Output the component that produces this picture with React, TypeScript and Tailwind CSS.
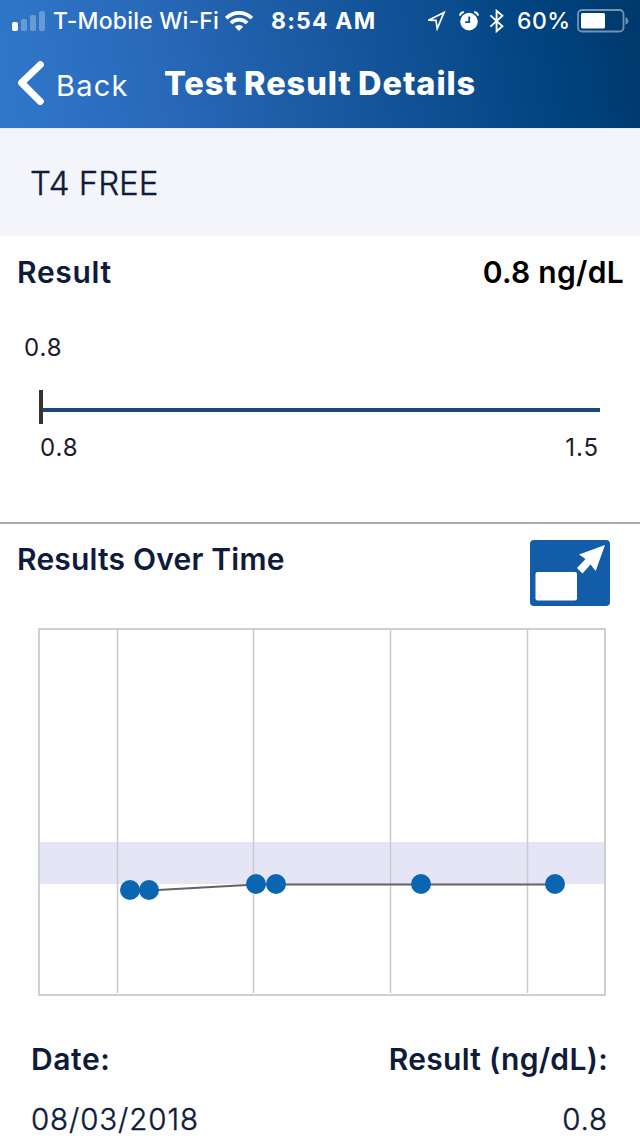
interface Reading {
  x: number;
  y: number;
}

interface ResultRow {
  date: string;
  value: string;
}

const readings: Reading[] = [
  { x: 92, y: 262 },
  { x: 111, y: 262 },
  { x: 218, y: 256 },
  { x: 238, y: 256 },
  { x: 383, y: 256 },
  { x: 517, y: 256 },
];

const gridLines = [79.5, 215.5, 352.5, 489.5];

const rows: ResultRow[] = [{ date: "08/03/2018", value: "0.8" }];

function StatusBar() {
  return (
    <div className="flex h-[41px] items-center whitespace-nowrap pl-3 text-[23px] font-medium leading-none">
      <svg width="34" height="20" viewBox="0 0 34 20" fill="currentColor">
        <rect x="0" y="11" width="6" height="9" rx="1.8" />
        <rect x="9" y="8" width="6" height="12" rx="1.8" opacity="0.28" />
        <rect x="18" y="4" width="6" height="16" rx="1.8" opacity="0.28" />
        <rect x="27" y="0" width="6" height="20" rx="1.8" opacity="0.28" />
      </svg>
      <span className="ml-[7px] w-[172px] pt-px tracking-[0.2px]">T-Mobile Wi-Fi</span>
      <svg width="28" height="20" viewBox="0 0 28 20" fill="none" stroke="currentColor" strokeWidth="3.8">
        <path d="M1.2 7.2a18.2 18.2 0 0 1 25.6 0" />
        <path d="M5.9 12a11.5 11.5 0 0 1 16.2 0" />
        <path d="M14 20l-4.2-4.3a6 6 0 0 1 8.4 0z" fill="currentColor" stroke="none" />
      </svg>
      <span className="ml-[18px] w-[154px] pt-px font-bold tracking-[1.2px]">8:54 AM</span>
      <svg width="22" height="20" viewBox="0 0 22 20" fill="none" stroke="currentColor" strokeWidth="1.7">
        <path d="M19 1.6L3.4 9.2l7.600 .2 1.200 8.200z" />
      </svg>
      <svg className="ml-[12px]" width="20" height="20" viewBox="0 0 20 20" fill="none" stroke="currentColor">
        <circle cx="10" cy="10.6" r="8.8" fill="currentColor" stroke="none" />
        <path d="M10.2 5.4v5.8H6.2" stroke="#0b4c8c" strokeWidth="1.8" />
        <path d="M.8 4.6Q1.6 1.6 4.8 1M19.2 4.6Q18.4 1.6 15.2 1" strokeWidth="1.8" />
      </svg>
      <svg className="ml-[10px]" width="16" height="24" viewBox="0 0 16 24" fill="none" stroke="currentColor" strokeWidth="1.9">
        <path d="M1.4 6.4l12 10.8-5.8 5V1.8l5.8 5L1.4 17.6" />
      </svg>
      <span className="ml-[12px] w-[60px] pt-px tracking-[0.5px]">60%</span>
      <svg width="54" height="24" viewBox="0 0 54 24" fill="none">
        <rect x="1" y="1" width="45.5" height="21.5" rx="4" stroke="#fff" strokeWidth="1.8" opacity="0.45" />
        <rect x="4" y="4" width="24" height="15.5" rx="1.5" fill="#fff" />
        <path d="M48.5 8q3 1.5 3 4t-3 4z" fill="#fff" opacity="0.45" />
      </svg>
    </div>
  );
}

function NavBar() {
  return (
    <div className="flex h-[87px] items-center whitespace-nowrap pl-[17px]">
      <svg width="27" height="44" viewBox="0 0 27 44" fill="none" stroke="currentColor" strokeWidth="7" strokeLinecap="round" strokeLinejoin="round" className="mb-1">
        <path d="M23.3 3.7L4.5 21.7l18.8 18.7" />
      </svg>
      <span className="ml-[12px] w-[108px] pt-[2px] text-[29px] tracking-[1.2px]">Back</span>
      <h1 className="text-[32.5px] font-extrabold tracking-[0.9px] [word-spacing:-1.5px]">Test Result Details</h1>
    </div>
  );
}

function RangeBar() {
  return (
    <div className="pt-[23px] text-2xl leading-[32px] tracking-[0.9px] text-[#1b1b2c]">
      <div className="pl-6">0.8</div>
      <div className="mt-[26px] ml-[39px] flex h-[34px] w-[561px] items-center">
        <div className="h-full w-1 bg-[#333]" />
        <div className="mt-[6px] h-1 flex-1 bg-[#1c4a75]" />
      </div>
      <div className="mt-[8px] flex justify-between pl-10 pr-[41px]">
        <span>0.8</span>
        <span>1.5</span>
      </div>
    </div>
  );
}

function ExpandButton() {
  return (
    <button className="h-[66px] w-20" aria-label="Expand">
      <svg width="80" height="66" viewBox="0 0 80 66">
        <rect width="80" height="66" rx="4" fill="#125ca8" />
        <rect x="5.5" y="32" width="41.5" height="28.5" rx="2" fill="#fff" />
        <path d="M75 5L49 14.5l6.5 4.5L47 28l5.5 5.5 8-9L65.7 31z" fill="#fff" />
      </svg>
    </button>
  );
}

function TrendChart() {
  return (
    <svg className="ml-[38px] block" width="568" height="368" viewBox="0 0 568 368">
      <rect x="2" y="214" width="564" height="42" fill="#e4e6f6" />
      {gridLines.map((x) => (
        <line key={x} x1={x} x2={x} y1="2" y2="365" stroke="#cbcbcd" strokeWidth="1.5" />
      ))}
      <rect x="1" y="1" width="566" height="366" fill="none" stroke="#cfcfcf" strokeWidth="2" />
      <polyline
        points={readings.map((r) => `${r.x},${r.y + 0.5}`).join(" ")}
        fill="none"
        stroke="#65616a"
        strokeWidth="2"
      />
      {readings.map((r) => (
        <circle key={r.x} cx={r.x} cy={r.y} r="10" fill="#0a66b0" />
      ))}
    </svg>
  );
}

export default function App() {
  return (
    <div className="h-[1136px] w-[640px] overflow-hidden bg-[#fefefe] font-[Inter,sans-serif] text-[#0e1b3a] [font-feature-settings:'calt'_0]">
      <header className="h-32 bg-[linear-gradient(80deg,#3178ca_0%,#2767b7_28%,#0b4d8e_70%,#00427e_86%,#00386a_100%)] text-white">
        <StatusBar />
        <NavBar />
      </header>

      <section className="flex h-[108px] items-center border-t border-[#e3effa] bg-[#f3f5fa] pl-[30px] pt-[2px] text-[33px] font-light [-webkit-text-stroke:0.4px]">
        T4 FREE
      </section>

      <section className="h-[286px]">
        <div className="flex h-[73px] items-center justify-between pl-[17px] pr-4 text-[30px] font-semibold">
          <h2 className="tracking-[0.7px]">Result</h2>
          <span className="tracking-[0.3px] text-black">0.8 ng/dL</span>
        </div>
        <RangeBar />
      </section>

      <section className="border-t-2 border-[#aaa]">
        <div className="flex h-[104px] justify-between pl-[17px] pr-[30px] pt-4">
          <h2 className="text-[30px] font-semibold leading-[39px] tracking-[0.2px]">Results Over Time</h2>
          <ExpandButton />
        </div>
        <TrendChart />
      </section>

      <section className="pl-[31px] pr-8 pt-[43px] text-[30px] leading-[40px]">
        <div className="flex justify-between font-semibold">
          <span className="tracking-[0.6px]">Date:</span>
          <span className="tracking-[0.3px]">Result (ng/dL):</span>
        </div>
        {rows.map((row) => (
          <div key={row.date} className="mt-6 flex justify-between text-[29.5px] font-light leading-[32px] tracking-[0.9px] [-webkit-text-stroke:0.4px]">
            <span>{row.date}</span>
            <span>{row.value}</span>
          </div>
        ))}
      </section>
    </div>
  );
}
